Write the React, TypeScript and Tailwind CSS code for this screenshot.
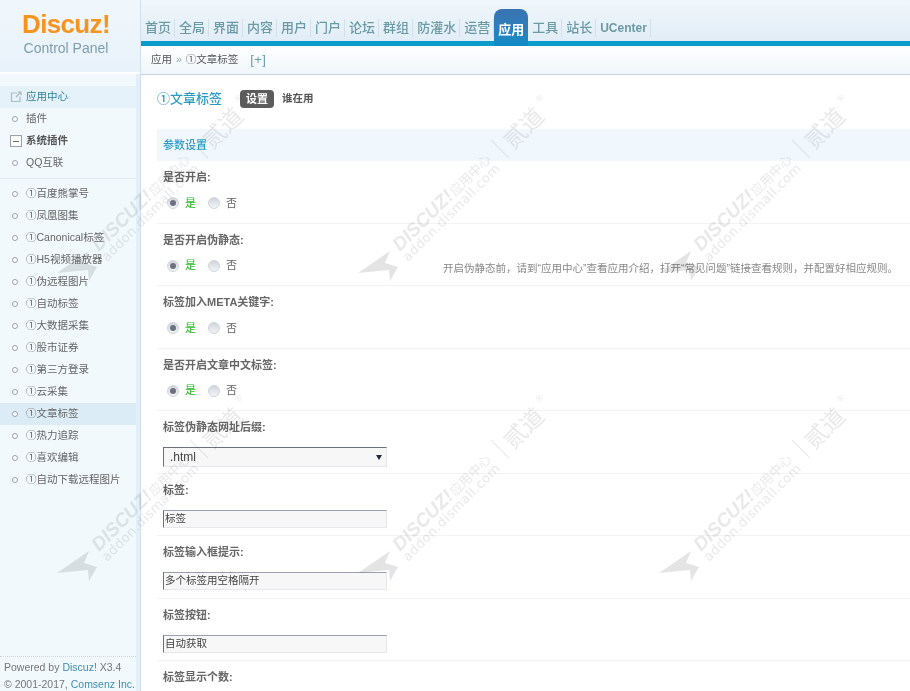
import type { ReactNode } from 'react';

const NAV_ITEMS = ['首页', '全局', '界面', '内容', '用户', '门户', '论坛', '群组', '防灌水', '运营', '应用', '工具', '站长', 'UCenter'];

const PLUGINS = [
  '①百度熊掌号',
  '①凤凰图集',
  '①Canonical标签',
  '①H5视频播放器',
  '①伪远程图片',
  '①自动标签',
  '①大数据采集',
  '①股市证券',
  '①第三方登录',
  '①云采集',
  '①文章标签',
  '①热力追踪',
  '①喜欢编辑',
  '①自动下载远程图片',
];

const WATERMARKS = [
  [57, 273],
  [358, 273],
  [659, 273],
  [57, 573],
  [358, 573],
  [659, 573],
];

const REWRITE_TIP =
  '开启伪静态前\uFF0C请到“应用中心”查看应用介绍\uFF0C打开“常见问题”链接查看规则\uFF0C并配置好相应规则。';

function Dot() {
  return <span className="h-1.5 w-1.5 shrink-0 rounded-full border border-gray-400 bg-white" />;
}

function SideItem({ label, active }: { label: string; active?: boolean }) {
  return (
    <div className={`flex h-5.5 items-center gap-2 pl-3 ${active ? 'bg-[#dcecf7]' : ''}`}>
      <Dot />
      <span className="whitespace-nowrap">{label}</span>
    </div>
  );
}

function Sidebar() {
  return (
    <aside className="flex min-h-0 flex-1 flex-col border-r-4 border-[#e3f0f9] bg-[#f1f9fd] pt-3 text-[10.5px] text-[#666]">
      <div className="flex h-5.5 items-center gap-1 bg-[#e6f2fa] pl-2.5 text-[#2f7f9f]">
        <svg width="12" height="12" viewBox="0 0 12 12" fill="none" stroke="#a9bcc8" strokeWidth="1.2">
          <path d="M7 2H1.5v8.5H10V5.5" />
          <path d="M6 6l4.5-4.5M8 1.2h3v3" />
        </svg>
        <span>应用中心</span>
      </div>
      <SideItem label="插件" />
      <div className="flex h-5.5 items-center gap-1 pl-2.5 font-bold text-[#555]">
        <span className="flex h-3 w-3 items-center justify-center border border-gray-400 bg-white">
          <span className="h-px w-1.5 bg-gray-500" />
        </span>
        <span>系统插件</span>
      </div>
      <SideItem label="QQ互联" />
      <div className="mt-1 mb-1 border-b border-[#e3edf3]" />
      {PLUGINS.map((name) => (
        <SideItem key={name} label={name} active={name === '①文章标签'} />
      ))}
      <div className="mt-auto -mb-0.5 border-t border-dotted border-gray-300 px-1 pt-0.5 font-['Liberation_Sans',sans-serif] leading-[17px] whitespace-nowrap text-[#777]">
        <p>
          Powered by <span className="text-[#3f8db0]">Discuz!</span> X3.4
        </p>
        <p>
          © 2001-2017, <span className="text-[#3f8db0]">Comsenz Inc.</span>
        </p>
      </div>
    </aside>
  );
}

function Radio({ checked }: { checked?: boolean }) {
  return (
    <span className="flex h-3 w-3 items-center justify-center rounded-full border border-gray-300 bg-gradient-to-b from-gray-300 to-gray-100">
      {checked && <span className="h-1.5 w-1.5 rounded-full bg-gray-500" />}
    </span>
  );
}

function YesNo() {
  return (
    <div className="mt-2 flex h-5 w-70 shrink-0 items-center pl-1 text-[11px]">
      <Radio checked />
      <span className="ml-1.5 text-[#22bb22]">是</span>
      <span className="ml-3">
        <Radio />
      </span>
      <span className="ml-1.5 text-[#666]">否</span>
    </div>
  );
}

function TextBox({ value }: { value: string }) {
  return (
    <div className="mt-3 flex h-4.5 w-56 items-center border border-t-gray-400 border-r-gray-200 border-b-gray-200 border-l-gray-500 bg-[#f7f7f7] pl-px text-[10.5px] text-[#444]">
      {value}
    </div>
  );
}

function Row({ label, children }: { label: string; children: ReactNode }) {
  return (
    <div className="h-[62.5px] border-b border-[#f3f3f3] pt-2 pl-1.5">
      <div className="h-4 text-[11px] leading-4 font-bold text-[#666]">{label}</div>
      {children}
    </div>
  );
}

function Watermarks() {
  return (
    <svg className="pointer-events-none absolute inset-0 h-full w-full mix-blend-multiply" fill="#e9e9e9">
      {WATERMARKS.map(([x, y]) => (
        <g key={`${x}-${y}`} transform={`translate(${x} ${y})`}>
          <polygon points="0,0 32,-22 27,-10 40,-6 32,8 31,-3" fill="#e4e4e4" />
          <g transform="rotate(-45 42 -21)">
            <text x="42" y="-21" fontFamily="Liberation Sans" fontSize="19" fontWeight="700" fontStyle="italic">
              DISCUZ!
            </text>
            <text x="120" y="-21" fontFamily="Noto Sans CJK SC" fontSize="13">
              应用中心
            </text>
            <rect x="185" y="-36" width="1" height="26" />
            <text x="194" y="-13" fontFamily="Noto Sans CJK SC" fontSize="23">
              贰道
            </text>
            <text x="246" y="-28" fontFamily="Liberation Sans" fontSize="9">
              ®
            </text>
          </g>
          <text
            transform="rotate(-45 50 -11)"
            x="50"
            y="-11"
            fontFamily="DejaVu Sans"
            fontSize="13"
            letterSpacing="0.5"
          >
            addon.dismall.com
          </text>
        </g>
      ))}
    </svg>
  );
}

export default function App() {
  return (
    <div className="relative flex h-screen overflow-hidden bg-white font-['Liberation_Sans','Noto_Sans_CJK_SC',sans-serif]">
      <div className="flex w-35 shrink-0 flex-col">
        <div className="flex h-[74px] shrink-0 flex-col items-center border-b-2 border-white bg-gradient-to-b from-[#f0f7fc] to-[#e8f2fa] pt-2 pr-2">
          <div className="font-['Liberation_Sans',sans-serif] text-[26px] leading-8 font-bold tracking-tight text-[#f8941d]">
            Discuz!
          </div>
          <div className="font-['Liberation_Sans',sans-serif] text-sm leading-4 text-[#7f9eac]">Control Panel</div>
        </div>
        <Sidebar />
      </div>

      <div className="flex min-w-0 flex-1 flex-col border-l border-[#cfe0ec]">
        <nav className="flex h-[46px] shrink-0 items-end border-b-[5px] border-[#0b9ccb] bg-gradient-to-b from-[#f0f7fc] to-[#e1edf7] text-[13px] font-medium text-[#6b9aa4]">
          {NAV_ITEMS.map((item) =>
            item === '应用' ? (
              <div
                key={item}
                className="-mb-[5px] flex h-[37px] items-center rounded-t-lg bg-gradient-to-b from-[#3a72b0] to-[#0a8cc6] px-1 pt-1 font-bold text-white"
              >
                {item}
              </div>
            ) : (
              <div key={item} className="mb-1 flex h-4.5 items-center border-r border-[#d3e0e8] pr-[3px] pl-1 last:text-xs last:font-bold">
                {item}
              </div>
            ),
          )}
        </nav>
        <div className="flex h-[29px] shrink-0 items-center gap-1 border-b border-[#c6d4de] bg-gradient-to-b from-white to-[#eff6fb] pl-2.5 text-[10.5px] text-[#555]">
          <span>应用</span>
          <span className="text-gray-400">»</span>
          <span>①文章标签</span>
          <span className="ml-2 text-[13px] tracking-wide text-[#6a9ab0]">[+]</span>
        </div>

        <main className="min-h-0 flex-1 pl-4">
          <div className="mt-3 mb-4.5 flex h-6 items-center">
            <h1 className="text-[13px] font-medium text-[#2a9cc4]">①文章标签</h1>
            <span className="ml-4.5 rounded bg-[#5c5c5c] px-1.5 py-0.5 text-[11px] leading-3.5 font-bold text-white">设置</span>
            <span className="ml-2 text-[10.5px] font-bold text-[#555]">谁在用</span>
          </div>
          <div className="flex h-8 items-center bg-[#f1f8fd] pl-1.5 text-[11px] font-medium text-[#2a9cc4]">参数设置</div>

          <Row label="是否开启:">
            <YesNo />
          </Row>
          <Row label="是否开启伪静态:">
            <div className="flex">
              <YesNo />
              <span className="mt-3 text-[10.5px] leading-4 whitespace-nowrap text-[#888]">{REWRITE_TIP}</span>
            </div>
          </Row>
          <Row label="标签加入META关键字:">
            <YesNo />
          </Row>
          <Row label="是否开启文章中文标签:">
            <YesNo />
          </Row>
          <Row label="标签伪静态网址后缀:">
            <div className="mt-3 flex h-5 w-56 items-center justify-between border border-t-gray-500 border-r-gray-200 border-b-gray-200 border-l-gray-500 bg-[#f7f7f7] pr-1 pl-1.5 text-xs text-[#444]">
              <span>.html</span>
              <span className="h-0 w-0 border-x-[3px] border-t-[5px] border-x-transparent border-t-gray-800" />
            </div>
          </Row>
          <Row label="标签:">
            <TextBox value="标签" />
          </Row>
          <Row label="标签输入框提示:">
            <TextBox value="多个标签用空格隔开" />
          </Row>
          <Row label="标签按钮:">
            <TextBox value="自动获取" />
          </Row>
          <Row label="标签显示个数:">
            <div />
          </Row>
        </main>
      </div>
      <Watermarks />
    </div>
  );
}
